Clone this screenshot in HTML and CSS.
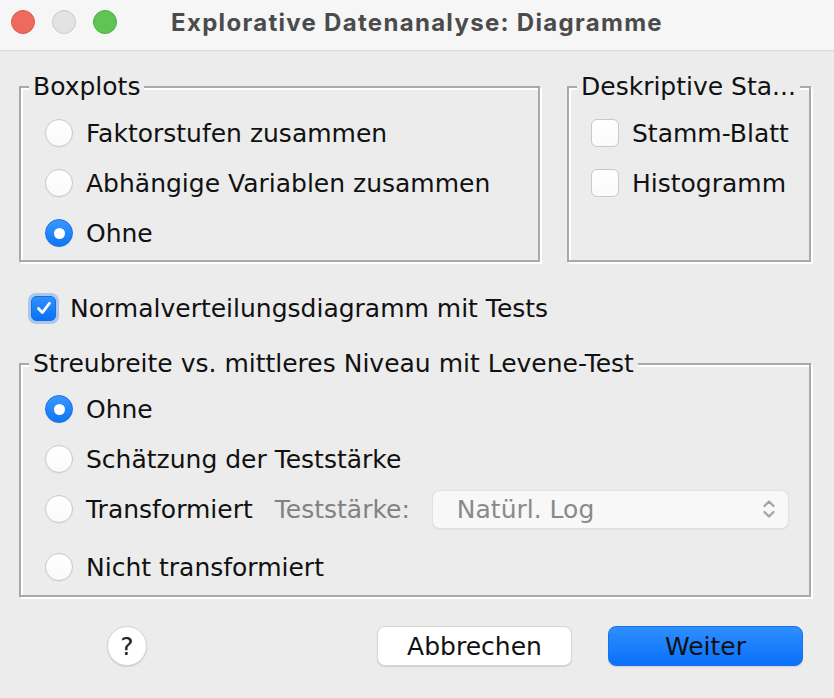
FILE: index.html
```html
<!DOCTYPE html>
<html lang="de">
<head>
<meta charset="utf-8">
<title>Explorative Datenanalyse: Diagramme</title>
<link rel="stylesheet" href="styles.css">
</head>
<body>
<div class="window">
  <header class="titlebar">
    <div class="lights">
      <span class="light red"></span>
      <span class="light gray"></span>
      <span class="light green"></span>
    </div>
    <div class="title">Explorative Datenanalyse: Diagramme</div>
    <div class="spacer"></div>
  </header>

  <main class="content">
    <div class="toprow">
      <fieldset class="group boxplots">
        <legend>Boxplots</legend>
        <div class="inner">
          <div class="row"><span class="radio"></span><span>Faktorstufen zusammen</span></div>
          <div class="row"><span class="radio"></span><span>Abhängige Variablen zusammen</span></div>
          <div class="row"><span class="radio on"></span><span>Ohne</span></div>
        </div>
      </fieldset>
      <fieldset class="group desc">
        <legend>Deskriptive Sta...</legend>
        <div class="inner desc-inner">
          <div class="row"><span class="checkbox"></span><span>Stamm-Blatt</span></div>
          <div class="row"><span class="checkbox"></span><span>Histogramm</span></div>
        </div>
      </fieldset>
    </div>

    <div class="row normal">
      <span class="checkbox checked">
        <svg viewBox="0 0 24 24" width="24" height="24"><path d="M6 12.5 L10.2 17 L18 6.8" fill="none" stroke="#fff" stroke-width="3" stroke-linecap="round" stroke-linejoin="round"/></svg>
      </span>
      <span>Normalverteilungsdiagramm mit Tests</span>
    </div>

    <fieldset class="group spread">
      <legend>Streubreite vs. mittleres Niveau mit Levene-Test</legend>
      <div class="inner">
        <div class="row"><span class="radio on"></span><span>Ohne</span></div>
        <div class="row"><span class="radio"></span><span>Schätzung der Teststärke</span></div>
        <div class="row"><span class="radio"></span><span>Transformiert</span>
          <span class="dim">Teststärke:</span>
          <div class="combo"><span>Natürl. Log</span>
            <svg class="chev" viewBox="0 0 14 22" width="14" height="22"><path d="M2.5 8 L7 3.5 L11.5 8 M2.5 14 L7 18.5 L11.5 14" fill="none" stroke="#a3a3a3" stroke-width="2.2" stroke-linecap="round" stroke-linejoin="round"/></svg>
          </div>
        </div>
        <div class="row last"><span class="radio"></span><span>Nicht transformiert</span></div>
      </div>
    </fieldset>
  </main>

  <footer class="buttons">
    <button class="help">?</button>
    <div class="grow"></div>
    <button class="btn">Abbrechen</button>
    <button class="btn primary">Weiter</button>
  </footer>
</div>
</body>
</html>
```
FILE: styles.css
```css
* { box-sizing: border-box; }
html, body { margin: 0; padding: 0; }
body {
  background: #ececec;
  font-family: "DejaVu Sans", "Liberation Sans", sans-serif;
  font-size: 25px;
  color: #111;
}
.window { width: 834px; height: 698px; overflow: hidden; background: #ececec; }

.titlebar {
  height: 51px;
  background: #f6f6f6;
  border-bottom: 1px solid #d9d9d9;
  display: grid;
  grid-template-columns: 1fr auto 1fr;
  align-items: center;
  padding-bottom: 6px;
}
.lights { display: flex; gap: 17px; padding-left: 11px; }
.light { width: 24px; height: 24px; border-radius: 50%; display: block; }
.light.red { background: #ee6a5f; border: 1px solid #d9594e; }
.light.gray { background: #e3e3e3; border: 1px solid #cbcbcb; }
.light.green { background: #5fc454; border: 1px solid #4fae45; }
.title {
  font-family: Inter, "Liberation Sans", sans-serif;
  font-weight: 700;
  font-size: 24px;
  color: #4b4b4b;
  letter-spacing: 1.3px;
}

.content { padding: 22px 23px 0 19px; }
.toprow { display: flex; gap: 27px; }

.group {
  margin: 0;
  padding: 0;
  min-width: 0;
  border: 2px solid #a9a9a9;
  box-shadow: inset 2px 2px 0 #fff, 2px 2px 0 #fff;
}
.group legend {
  padding: 0 4px;
  margin-left: 8px;
  line-height: 28px;
  background: #ececec;
}
.boxplots { width: 521px; }
.desc { flex: 1; }
.inner { padding: 7px 0 2px 24px; }
.desc-inner { padding-left: 22px; }

.row { display: flex; align-items: center; height: 50px; white-space: nowrap; }
.radio {
  width: 28px; height: 28px; border-radius: 50%;
  background: linear-gradient(#ffffff, #fafafa);
  border: 1px solid #c9c9c9;
  box-shadow: 0 0.5px 1px rgba(0,0,0,0.08);
  margin-right: 13px;
  flex: none;
  display: flex; align-items: center; justify-content: center;
}
.radio.on {
  background: linear-gradient(#3b97fd, #0d76f7);
  border-color: #1572e6;
}
.radio.on::after {
  content: "";
  width: 11px; height: 11px; border-radius: 50%;
  background: #fff;
}
.checkbox {
  width: 28px; height: 28px; border-radius: 6px;
  background: linear-gradient(#ffffff, #fafafa);
  border: 1px solid #c9c9c9;
  margin-right: 13px;
  flex: none;
}
.normal { height: 34px; margin: 29px 0 25px 11px; }
.checkbox.checked {
  width: 25px; height: 25px;
  background: linear-gradient(#2f91fd, #0a70f4);
  border: 1px solid #1470e0;
  box-shadow: 0 0 0 3px rgba(110, 160, 230, 0.5);
  border-radius: 5px;
  margin-left: 1px;
  margin-right: 14px;
  display: flex; align-items: center; justify-content: center;
}
.checkbox.checked svg { width: 22px; height: 22px; }

.spread { width: 792px; }
.spread .inner { padding-top: 6px; padding-bottom: 3px; }
.row.last { margin-top: 8px; }
.dim { color: #828282; margin-left: 22px; }
.combo {
  margin-left: 22px;
  width: 357px; height: 39px;
  background: #f8f8f8;
  border: 1px solid #e2e2e2;
  border-radius: 8px;
  box-shadow: 0 0.5px 1px rgba(0,0,0,0.06);
  display: flex; align-items: center; justify-content: space-between;
  padding: 0 12px 0 24px;
  color: #8a8a8a;
}

.buttons {
  display: flex; align-items: center;
  padding: 29px 31px 0 107px;
}
.grow { flex: 1; }
button { font-family: inherit; font-size: 25px; color: #111; cursor: default; }
.help {
  width: 40px; height: 40px; border-radius: 50%;
  background: #fff; border: 1px solid #d4d4d4;
  box-shadow: 0 1px 1px rgba(0,0,0,0.12);
  padding: 0; font-size: 25px; color: #222;
}
.btn {
  width: 195px; height: 40px; border-radius: 8px;
  background: #fff; border: 1px solid #d6d6d6;
  box-shadow: 0 1px 1px rgba(0,0,0,0.12);
  padding: 0;
}
.btn.primary {
  margin-left: 36px;
  background: linear-gradient(#2f8ffe, #0a6ffb);
  border-color: #1a73ea;
}
```
